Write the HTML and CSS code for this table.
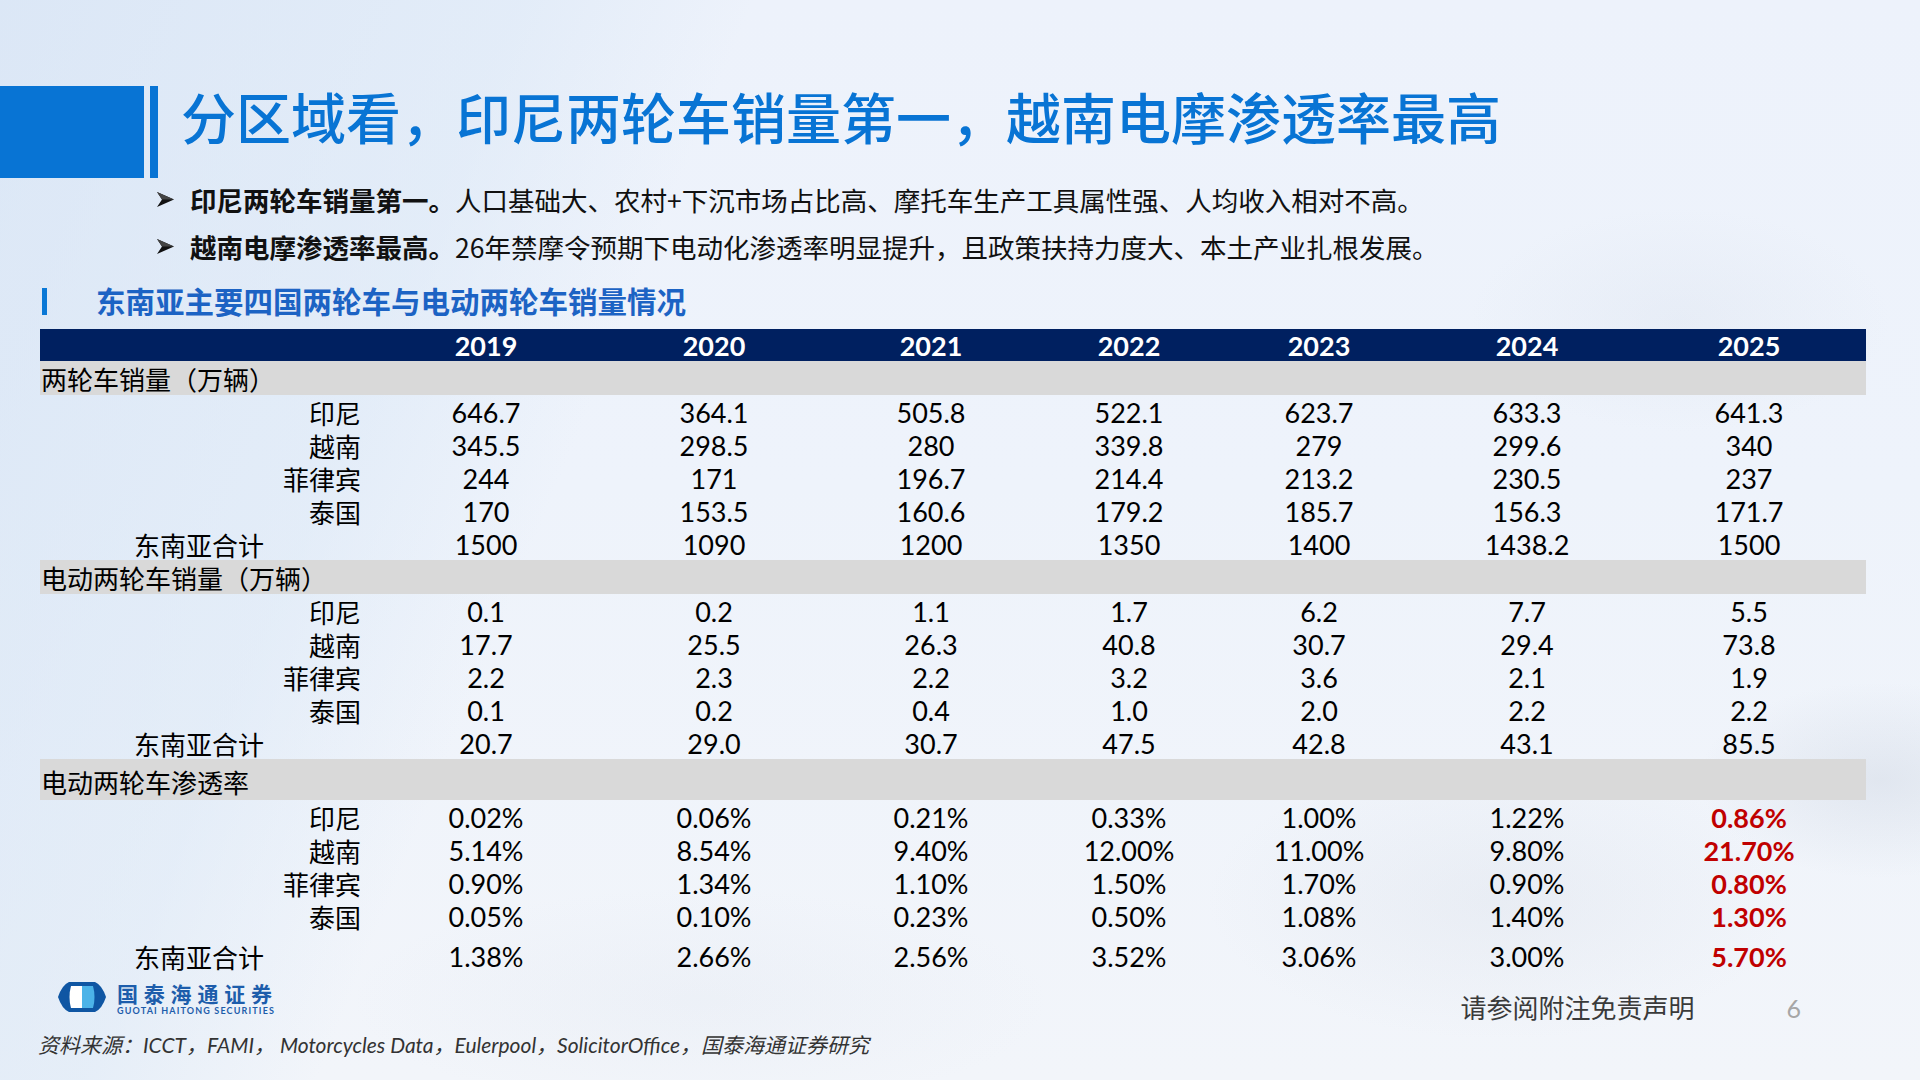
FILE: index.html
```html
<!DOCTYPE html>
<html lang="zh-CN">
<head>
<meta charset="utf-8">
<title>分区域看</title>
<link rel="stylesheet" href="styles.css">
</head>
<body>
<div class="slide">
  <div class="bg-mountain"></div>
  <header class="title-bar">
    <div class="title-block"></div>
    <div class="title-line"></div>
    <h1 class="title">分区域看，印尼两轮车销量第一，越南电摩渗透率最高</h1>
  </header>

  <ul class="bullets">
    <li><svg class="arrow" viewBox="0 0 17 15"><polygon points="0,0 17,7.5 0,15 5,7.5" fill="#111"/><polygon points="0,0 17,7.5 5,7.5" fill="#444"/></svg><span><b>印尼两轮车销量第一。</b>人口基础大、农村+下沉市场占比高、摩托车生产工具属性强、人均收入相对不高。</span></li>
    <li><svg class="arrow" viewBox="0 0 17 15"><polygon points="0,0 17,7.5 0,15 5,7.5" fill="#111"/><polygon points="0,0 17,7.5 5,7.5" fill="#444"/></svg><span><b>越南电摩渗透率最高。</b>26年禁摩令预期下电动化渗透率明显提升，且政策扶持力度大、本土产业扎根发展。</span></li>
  </ul>

  <div class="subtitle"><span class="sub-bar"></span><span class="sub-text">东南亚主要四国两轮车与电动两轮车销量情况</span></div>

  <div class="table">
    <div class="row head"><div></div><div>2019</div><div>2020</div><div>2021</div><div>2022</div><div>2023</div><div>2024</div><div>2025</div></div>

    <div class="row section"><div class="sec-label">两轮车销量（万辆）</div></div>
    <div class="row"><div class="lbl">印尼</div><div>646.7</div><div>364.1</div><div>505.8</div><div>522.1</div><div>623.7</div><div>633.3</div><div>641.3</div></div>
    <div class="row"><div class="lbl">越南</div><div>345.5</div><div>298.5</div><div>280</div><div>339.8</div><div>279</div><div>299.6</div><div>340</div></div>
    <div class="row"><div class="lbl">菲律宾</div><div>244</div><div>171</div><div>196.7</div><div>214.4</div><div>213.2</div><div>230.5</div><div>237</div></div>
    <div class="row"><div class="lbl">泰国</div><div>170</div><div>153.5</div><div>160.6</div><div>179.2</div><div>185.7</div><div>156.3</div><div>171.7</div></div>
    <div class="row"><div class="lbl total">东南亚合计</div><div>1500</div><div>1090</div><div>1200</div><div>1350</div><div>1400</div><div>1438.2</div><div>1500</div></div>

    <div class="row section"><div class="sec-label">电动两轮车销量（万辆）</div></div>
    <div class="row"><div class="lbl">印尼</div><div>0.1</div><div>0.2</div><div>1.1</div><div>1.7</div><div>6.2</div><div>7.7</div><div>5.5</div></div>
    <div class="row"><div class="lbl">越南</div><div>17.7</div><div>25.5</div><div>26.3</div><div>40.8</div><div>30.7</div><div>29.4</div><div>73.8</div></div>
    <div class="row"><div class="lbl">菲律宾</div><div>2.2</div><div>2.3</div><div>2.2</div><div>3.2</div><div>3.6</div><div>2.1</div><div>1.9</div></div>
    <div class="row"><div class="lbl">泰国</div><div>0.1</div><div>0.2</div><div>0.4</div><div>1.0</div><div>2.0</div><div>2.2</div><div>2.2</div></div>
    <div class="row"><div class="lbl total">东南亚合计</div><div>20.7</div><div>29.0</div><div>30.7</div><div>47.5</div><div>42.8</div><div>43.1</div><div>85.5</div></div>

    <div class="row section tall"><div class="sec-label">电动两轮车渗透率</div></div>
    <div class="row"><div class="lbl">印尼</div><div>0.02%</div><div>0.06%</div><div>0.21%</div><div>0.33%</div><div>1.00%</div><div>1.22%</div><div class="red">0.86%</div></div>
    <div class="row"><div class="lbl">越南</div><div>5.14%</div><div>8.54%</div><div>9.40%</div><div>12.00%</div><div>11.00%</div><div>9.80%</div><div class="red">21.70%</div></div>
    <div class="row"><div class="lbl">菲律宾</div><div>0.90%</div><div>1.34%</div><div>1.10%</div><div>1.50%</div><div>1.70%</div><div>0.90%</div><div class="red">0.80%</div></div>
    <div class="row"><div class="lbl">泰国</div><div>0.05%</div><div>0.10%</div><div>0.23%</div><div>0.50%</div><div>1.08%</div><div>1.40%</div><div class="red">1.30%</div></div>
    <div class="row last"><div class="lbl total">东南亚合计</div><div>1.38%</div><div>2.66%</div><div>2.56%</div><div>3.52%</div><div>3.06%</div><div>3.00%</div><div class="red">5.70%</div></div>
  </div>

  <footer class="footer">
    <div class="logo">
      <svg class="logo-icon" viewBox="0 0 48 30">
        <path d="M11,0 H37 Q44,3 48,15 Q44,27 37,30 H11 Q4,27 0,15 Q4,3 11,0 Z" fill="#0f56a3"/>
        <path d="M13,4 H24 V26 H13 Q10,15 13,4 Z" fill="#ffffff"/>
        <path d="M24,4 H35 Q38,15 35,26 H24 Z" fill="#4cb3e8"/>
      </svg>
      <div class="logo-text">
        <div class="logo-cn">国泰海通证券</div>
        <div class="logo-en">GUOTAI HAITONG SECURITIES</div>
      </div>
    </div>
    <div class="footer-right">
      <span class="disclaimer">请参阅附注免责声明</span>
      <span class="page-num">6</span>
    </div>
  </footer>
  <div class="source">资料来源：ICCT，FAMI， Motorcycles Data，Eulerpool，SolicitorOffice，国泰海通证券研究</div>
</div>
</body>
</html>
```

FILE: styles.css
```css
* { box-sizing: border-box; }
html, body { margin: 0; padding: 0; }
body {
  width: 1920px;
  height: 1080px;
  overflow: hidden;
  font-family: "Noto Sans CJK SC", sans-serif;
  color: #000;
}
.slide {
  position: relative;
  width: 1920px;
  height: 1080px;
  overflow: hidden;
  background:
    linear-gradient(112deg, rgba(205,222,242,0.55) 0%, rgba(214,229,245,0.45) 22%, rgba(236,242,251,0) 32%),
    linear-gradient(180deg, #edf2fb 0%, #eef3fb 45%, #f2f5fa 100%);
}
.bg-mountain {
  position: absolute;
  left: 0; top: 0; width: 1920px; height: 1080px;
  background:
    radial-gradient(ellipse 260px 140px at 1880px 780px, rgba(170,182,200,0.22), rgba(170,182,200,0) 70%),
    radial-gradient(ellipse 420px 200px at 1500px 900px, rgba(190,198,212,0.16), rgba(190,198,212,0) 70%),
    radial-gradient(ellipse 300px 160px at 1680px 320px, rgba(200,210,225,0.18), rgba(200,210,225,0) 70%),
    radial-gradient(ellipse 500px 160px at 700px 1000px, rgba(200,210,225,0.12), rgba(200,210,225,0) 70%);
  pointer-events: none;
}
.title-bar, .bullets, .subtitle, .table, .footer, .source { position: relative; }

/* Title */
.title-bar {
  display: flex;
  align-items: flex-start;
  height: 92px;
  margin-top: 86px;
}
.title-block { width: 144px; height: 92px; background: #0874d4; }
.title-line { width: 8px; height: 92px; margin-left: 6px; background: #0874d4; }
.title {
  margin: 0 0 0 23px;
  padding-top: 2px;
  font-size: 55px;
  line-height: 55px;
  font-weight: 500;
  color: #0874d4;
  white-space: nowrap;
}

/* Bullets */
.bullets {
  list-style: none;
  margin: -2px 0 0 0;
  padding: 0 0 0 157px;
  font-size: 26.5px;
  line-height: 47px;
  color: #111;
}
.bullets li { display: flex; align-items: center; white-space: nowrap; }
.bullets b { font-weight: 700; }
.arrow { width: 17px; height: 15px; margin-right: 16px; flex: none; }

/* Subtitle */
.subtitle {
  display: flex;
  align-items: flex-start;
  margin-top: 13px;
  height: 34px;
}
.sub-bar { width: 5px; height: 27px; margin: 5px 0 0 42px; background: #0a78d6; }
.sub-text {
  margin-left: 49px;
  font-size: 29.5px;
  line-height: 34px;
  font-weight: 700;
  color: #1c63c4;
}

/* Table */
.table {
  margin: 12px 0 0 40px;
  width: 1826px;
  font-family: "Lato", "Noto Sans CJK SC", sans-serif;
  font-size: 27px;
}
.row {
  display: grid;
  grid-template-columns: 332px 228px 228px 206px 190px 190px 226px 218px 8px;
  height: 33px;
  padding-top: 2px;
  line-height: 31px;
  text-align: center;
}
.row.head {
  background: #002060;
  color: #fff;
  font-weight: 700;
  height: 32px;
  line-height: 30px;
}
.row.section {
  display: block;
  background: #d9d9d9;
  height: 34px;
  line-height: 32px;
  text-align: left;
}
.row.section.tall { height: 41px; padding-top: 4px; line-height: 37px; }
.row.last { height: 48px; line-height: 46px; }
.sec-label {
  font-family: "Noto Sans CJK SC", sans-serif;
  font-size: 26px;
  padding-left: 1px;
}
.lbl {
  font-family: "Noto Sans CJK SC", sans-serif;
  font-size: 26px;
  text-align: right;
  padding-right: 11px;
}
.lbl.total { padding-right: 108px; }
.red { color: #c00000; font-weight: 700; }

/* Footer */
.footer {
  display: flex;
  align-items: flex-start;
  height: 30px;
  margin-top: 2px;
}
.logo { display: flex; align-items: flex-start; margin-left: 58px; }
.logo-icon { width: 48px; height: 30px; flex: none; }
.logo-text { margin-left: 11px; color: #1d5dab; }
.logo-cn {
  font-size: 21px;
  line-height: 21px;
  font-weight: 700;
  letter-spacing: 5.8px;
  margin-top: 1px;
  white-space: nowrap;
}
.logo-en {
  font-family: "Lato", sans-serif;
  font-size: 9px;
  line-height: 9px;
  font-weight: 700;
  letter-spacing: 1.15px;
  margin-top: 2px;
  white-space: nowrap;
}
.footer-right {
  display: flex;
  align-items: baseline;
  margin-left: auto;
  margin-right: 119px;
  margin-top: 10px;
}
.disclaimer { font-size: 26px; line-height: 30px; color: #3a3a3a; }
.page-num {
  margin-left: 92px;
  font-family: "Lato", sans-serif;
  font-size: 25px;
  color: #a6a6a6;
}
.source {
  margin: 20px 0 0 38px;
  font-size: 21px;
  line-height: 25px;
  font-style: italic;
  font-family: "Lato", "Noto Sans CJK SC", sans-serif;
  color: #333;
  white-space: nowrap;
}
```
